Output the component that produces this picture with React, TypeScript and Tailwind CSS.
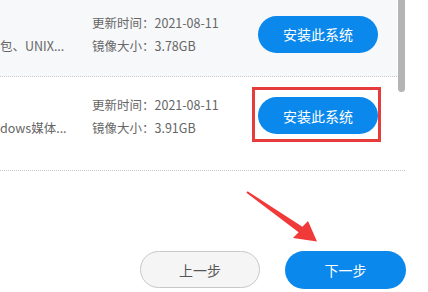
import React from 'react'

const font = { fontFamily: '"Microsoft YaHei", "Noto Sans CJK SC", "Noto Sans", sans-serif' }

type Item = { desc: string; date: string; size: string; highlight?: boolean }

const items: Item[] = [
  { desc: '包、UNIX...', date: '2021-08-11', size: '3.78GB' },
  { desc: 'dows媒体...', date: '2021-08-11', size: '3.91GB', highlight: true },
]

function InstallButton({ highlight }: { highlight?: boolean }) {
  return (
    <div className="relative">
      <button className="w-[120px] h-[37px] rounded-full bg-[#0b88ec] text-white text-[14px] leading-none">
        安装此系统
      </button>
      {highlight && (
        <div className="absolute left-[-6px] right-[-3px] top-[-10px] bottom-[-8px] border-[3px] border-[#e63c3c]" />
      )}
    </div>
  )
}

export default function App() {
  return (
    <div className="relative w-[428px] h-[292px] overflow-hidden bg-white" style={font}>
      <div className="w-[405px]">
        {items.map((item, i) => (
          <div
            key={i}
            className={
              i === 0
                ? 'flex items-center h-[77px] pb-[8px] border-b border-dotted border-[#c9c9c9] bg-[linear-gradient(to_right,#f7f8fa_397px,transparent_397px)]'
                : 'flex items-center h-[94px] pb-[16px] border-b border-dotted border-[#c9c9c9]'
            }
          >
            <div className="w-[92px] self-stretch flex flex-col justify-center">
              <div className="h-[23px]" />
              <div className="text-[12.5px] text-[#666] leading-[23px] whitespace-nowrap">{item.desc}</div>
            </div>
            <div className="w-[166px] text-[12.5px] text-[#666] leading-[23px] whitespace-nowrap">
              <div>更新时间：{item.date}</div>
              <div>镜像大小：{item.size}</div>
            </div>
            <InstallButton highlight={item.highlight} />
          </div>
        ))}
      </div>

      <div className="flex justify-end gap-[25px] pr-[22px] mt-[80px]">
        <button className="w-[120px] h-[37px] rounded-full bg-[#f5f5f5] border border-[#c8c8c8] text-[#555] text-[14px] leading-none">
          上一步
        </button>
        <button className="w-[121px] h-[38px] rounded-full bg-[#0b88ec] text-white text-[14px] leading-none">
          下一步
        </button>
      </div>

      {/* scrollbar thumb */}
      <div className="absolute left-[398px] top-0 w-[7px] h-[92px] rounded-b-full bg-[#b4b4b4]" />

      {/* red arrow */}
      <svg className="absolute left-0 top-0 pointer-events-none" width="428" height="292" viewBox="0 0 428 292">
        <polygon
          points="247.6,191.2 302.4,226.8 308,221 317,241.5 293,238 298.6,232.2 246.4,192.8"
          fill="#f03a3a"
        />
      </svg>
    </div>
  )
}
